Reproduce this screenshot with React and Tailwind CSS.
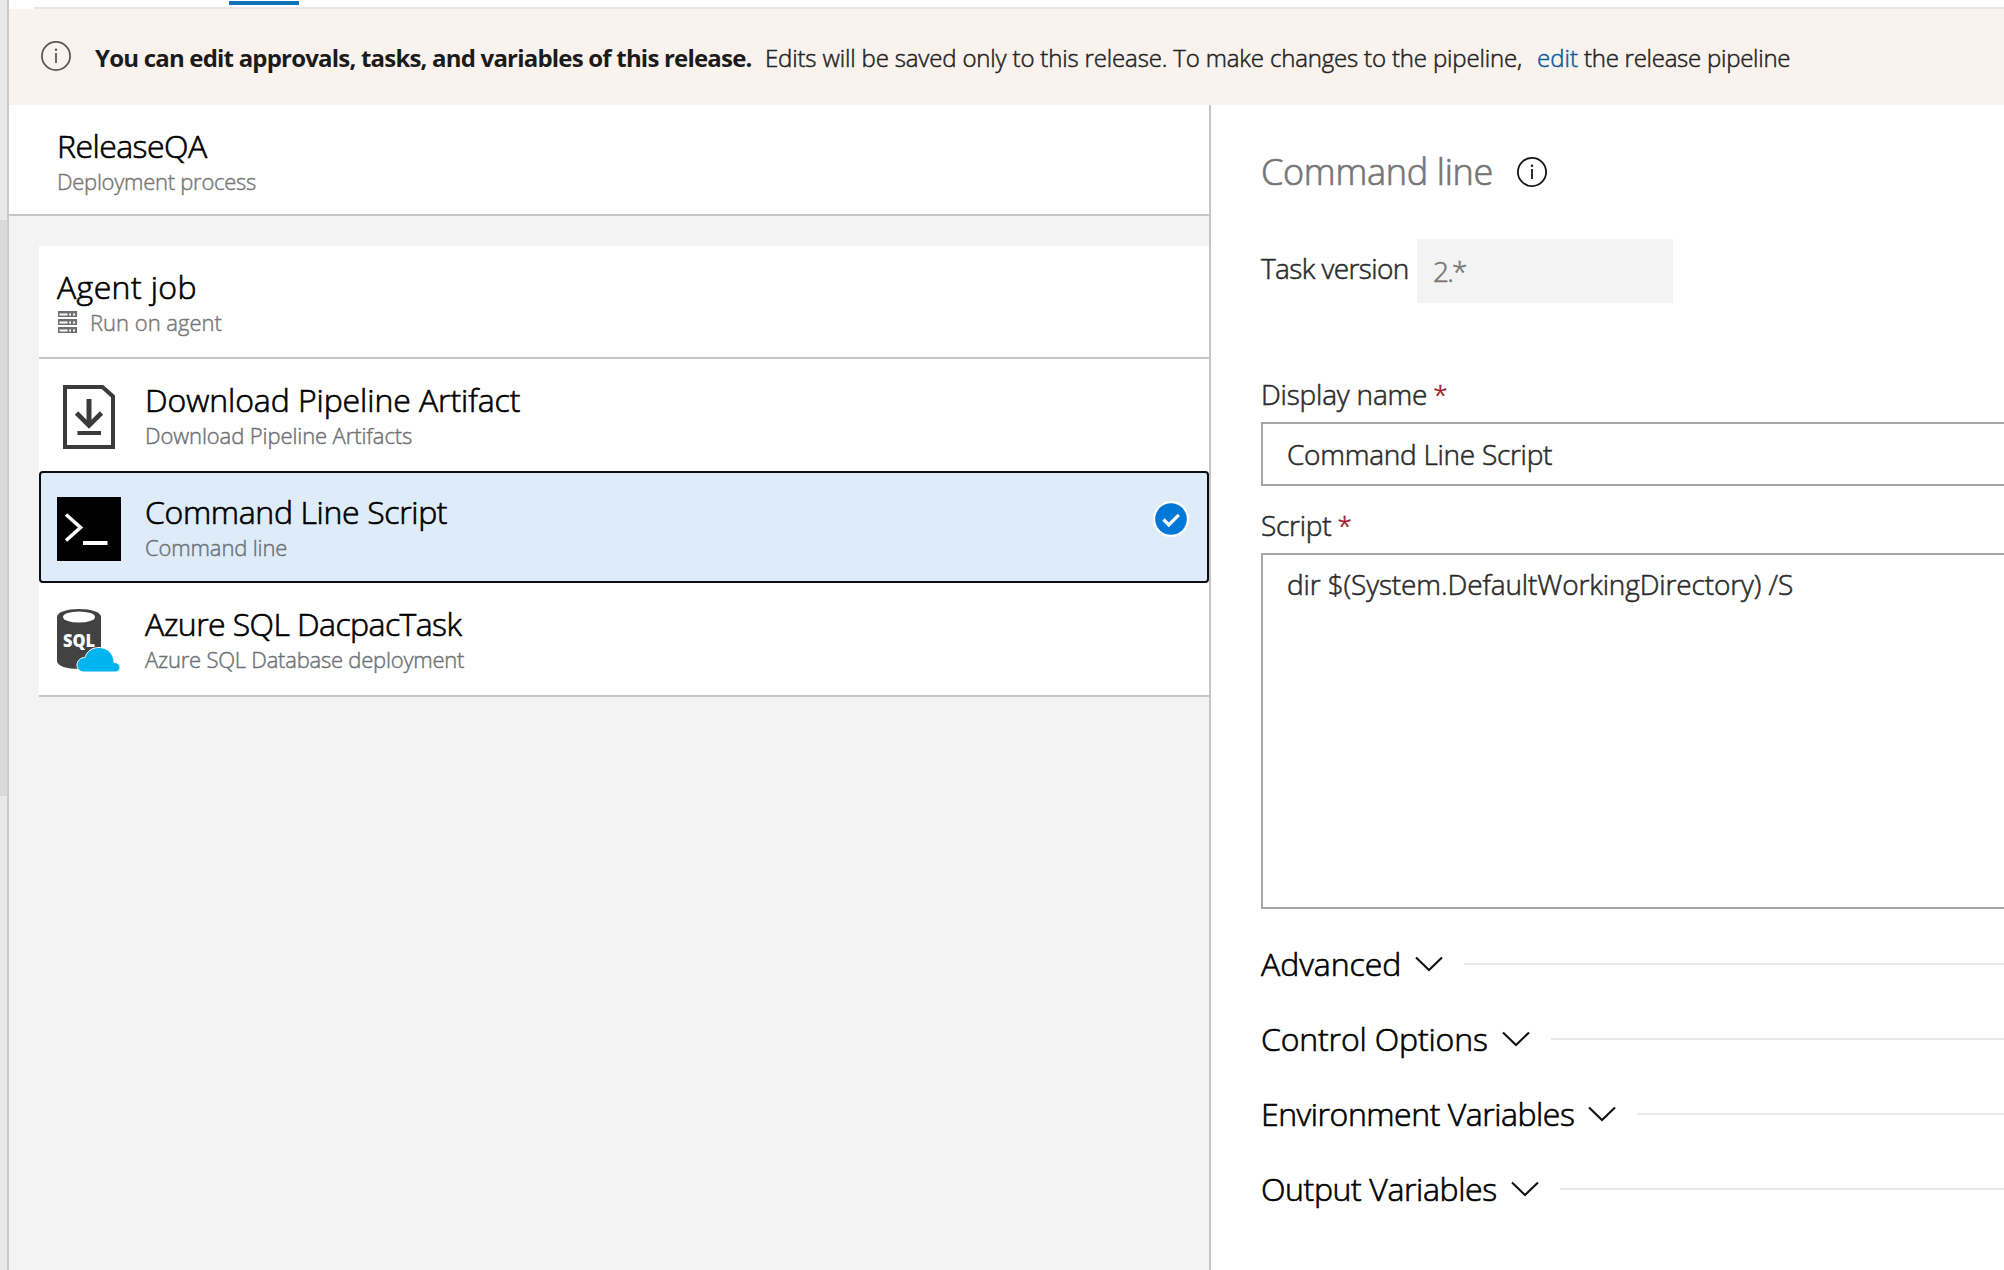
const text =
  "font-light whitespace-pre [-webkit-text-stroke-width:0.02em]";

function InfoIcon({ className }) {
  return (
    <svg viewBox="0 0 30 30" className={className} fill="none" stroke="currentColor">
      <circle cx="15" cy="15" r="14.1" strokeWidth="1.8" />
      <path d="M15 12V22" strokeWidth="1.8" />
      <circle cx="15" cy="8.800" r="1.2" fill="currentColor" stroke="none" />
    </svg>
  );
}

function ServersIcon() {
  return (
    <svg viewBox="0 0 19 22" className="ml-px h-[22px] w-[19px] shrink-0" fill="#6f6f6f">
      {[0, 8, 16].map((y) => (
        <path
          key={y}
          fillRule="evenodd"
          d={`M0 ${y}h19v6h-19z M1.500 ${y + 2.4}h8v2h-8z M11 ${y + 2.4}h2v2h-2z M15 ${y + 2.4}h2v2h-2z`}
        />
      ))}
    </svg>
  );
}

function DownloadIcon() {
  return (
    <svg viewBox="0 0 64 64" className="h-16 w-16 shrink-0" fill="none" stroke="#3b3b3b">
      <path d="M8 2H45.500L56 11.500V62H8Z" strokeWidth="4" />
      <path d="M32 14V40" strokeWidth="5" />
      <path d="M19.500 28L32 40.500L44.500 28" strokeWidth="4.6" />
      <path d="M20.500 48H44" strokeWidth="4" />
    </svg>
  );
}

function TerminalIcon() {
  return (
    <svg viewBox="0 0 64 64" className="h-16 w-16 shrink-0" fill="none" stroke="#fff">
      <rect width="64" height="64" fill="#000" stroke="none" />
      <path d="M9 17.500L23.500 30.500L9 43.500" strokeWidth="3.6" />
      <path d="M26 46H50.500" strokeWidth="4" />
    </svg>
  );
}

function SqlIcon() {
  return (
    <svg viewBox="0 0 64 64" className="h-16 w-16 shrink-0">
      <path d="M0 8C0 3 10 0 22 0S44 3 44 8V52C44 57 34 60 22 60S0 57 0 52Z" fill="#424242" />
      <ellipse cx="22" cy="8" rx="16" ry="5.6" fill="#fff" />
      <text
        x="22"
        y="38"
        textAnchor="middle"
        textLength="32"
        lengthAdjust="spacingAndGlyphs"
        fill="#fff"
        className="font-['Open_Sans',sans-serif] text-[17px] font-extrabold"
      >
        SQL
      </text>
      <path
        d="M27 63C22.500 63 20 60 20 56C20 51.500 23.500 48.500 28 48.500C29.500 42.500 35 38.500 42 38.500C50.500 38.500 57 45 57 53.500C60.500 53.500 63 55.500 63 58.500C63 61.500 60.500 63 58 63Z"
        fill="#00b4f0"
        stroke="#fff"
        strokeWidth="1"
      />
    </svg>
  );
}

function CheckBadge() {
  return (
    <svg viewBox="0 0 36 36" className="mt-[30px] mr-[20px] h-9 w-9 shrink-0">
      <circle cx="18" cy="18" r="18" fill="#fff" />
      <circle cx="18" cy="18" r="15.800" fill="#0078d7" />
      <path d="M10.500 18.500L15.800 23.800L25.800 13.800" fill="none" stroke="#fff" strokeWidth="3.300" />
    </svg>
  );
}

function Task({ icon, title, titleSpacing, subtitle, subtitleSpacing, selected, className }) {
  return (
    <div className={className}>
      <div className="pt-[26px]">{icon}</div>
      <div className="ml-6 flex-1 pt-[21px]">
        <div className={`text-[32px] leading-[40px] text-black ${titleSpacing} ${text}`}>{title}</div>
        <div className={`text-[22px] leading-[30px] text-[#6e7276] ${subtitleSpacing} ${text}`}>{subtitle}</div>
      </div>
      {selected && <CheckBadge />}
    </div>
  );
}

function Section({ title, spacing }) {
  return (
    <div className="flex h-[75px] items-start">
      <h3 className={`pt-px text-[32px] leading-[40px] text-black ${spacing} ${text}`}>{title}</h3>
      <svg viewBox="0 0 28 16" className="mt-[13px] ml-[14px] h-4 w-7 shrink-0" fill="none" stroke="#111">
        <path d="M1 1.500L14 14L27 1.500" strokeWidth="2.100" />
      </svg>
      <div className="mt-5 ml-[21px] h-0.5 flex-1 bg-[#e9e9e9]" />
    </div>
  );
}

function Label({ children, spacing, className }) {
  return (
    <div className={`flex gap-[6px] text-[28px] leading-[36px] ${className} ${text}`}>
      <span className={`text-[#2b2b2b] ${spacing}`}>{children}</span>
      <span className="text-[26px] text-[#a31522]">*</span>
    </div>
  );
}

export default function App() {
  return (
    <div className="flex h-[1270px] w-[2004px] overflow-hidden bg-white font-['Open_Sans',sans-serif]">
      <div className="flex w-[9px] shrink-0 flex-col border-r-2 border-[#cbcbcb] bg-[#e9e9e9] pt-[220px]">
        <div className="h-[576px] bg-[#dadada]" />
      </div>

      <div className="flex min-w-0 flex-1 flex-col">
        <div className="h-[7px] shrink-0 pt-px">
          <div className="ml-[220px] h-1 w-[70px] bg-[#0f73b9]" />
        </div>
        <div className="ml-[25px] h-0.5 shrink-0 bg-[#ebe6e4]" />

        <div className="flex h-24 shrink-0 bg-[#faf2ec]">
          <InfoIcon className="mt-8 ml-8 h-[30px] w-[30px] shrink-0 text-[#5c5856]" />
          <div className="ml-[24px] flex pt-[31px] text-[24px] leading-[36px] text-[#222]">
            <span className="w-[670px] text-[24px] font-bold tracking-[-0.800px] whitespace-pre text-[#1b1b1b]">
              You can edit approvals, tasks, and variables of this release.
            </span>
            <span className={`w-[772px] tracking-[-0.160px] ${text}`}>
              Edits will be saved only to this release. To make changes to the pipeline,
            </span>
            <a className={`w-[47px] text-[#0a5a9e] ${text}`}>edit</a>
            <span className={`tracking-[-0.260px] ${text}`}>the release pipeline</span>
          </div>
        </div>

        <div className="flex min-h-0 flex-1">
          <div className="flex w-[1202px] shrink-0 flex-col border-r-2 border-[#c6c6c6] bg-[#f3f3f3]">
            <div className="h-[111px] shrink-0 border-b-2 border-[#c6c6c6] bg-white pt-[21px] pl-12">
              <div className={`text-[32px] leading-[40px] tracking-[-0.550px] text-black ${text}`}>ReleaseQA</div>
              <div className={`text-[22px] leading-[30px] tracking-[-0.270px] text-[#777] ${text}`}>
                Deployment process
              </div>
            </div>

            <div className="mt-[30px] ml-[30px] bg-white">
              <div className="h-[113px] border-b-2 border-[#c6c6c6] pt-[21px] pl-[18px]">
                <div className={`text-[32px] leading-[40px] tracking-[0.400px] text-black ${text}`}>Agent job</div>
                <div className="flex items-center">
                  <ServersIcon />
                  <span className={`ml-[13px] text-[22px] leading-[30px] text-[#777] ${text}`}>Run on agent</span>
                </div>
              </div>
              <Task
                className="flex h-28 pl-[18px]"
                icon={<DownloadIcon />}
                title="Download Pipeline Artifact"
                titleSpacing="tracking-[-0.090px]"
                subtitle="Download Pipeline Artifacts"
                subtitleSpacing="tracking-[-0.100px]"
              />
              <Task
                className="flex h-28 rounded-[4px] bg-[#deebf8] pl-[18px] ring-2 ring-[#0b0e12] ring-inset"
                icon={<TerminalIcon />}
                title="Command Line Script"
                titleSpacing="tracking-[-0.350px]"
                subtitle="Command line"
                subtitleSpacing="tracking-[-0.140px]"
                selected
              />
              <Task
                className="flex h-[114px] border-b-2 border-[#c6c6c6] pl-[18px]"
                icon={<SqlIcon />}
                title="Azure SQL DacpacTask"
                titleSpacing="tracking-[-0.580px]"
                subtitle="Azure SQL Database deployment"
                subtitleSpacing="tracking-[-0.220px]"
              />
            </div>
          </div>

          <div className="flex min-w-0 flex-1 flex-col pl-[50px]">
            <div className="mt-[41px] flex h-[52px] items-center">
              <h2 className={`text-[36px] leading-[52px] tracking-[-0.290px] text-[#767676] ${text}`}>
                Command line
              </h2>
              <InfoIcon className="ml-6 h-[30px] w-[30px] shrink-0 text-[#151515]" />
            </div>

            <div className="mt-[41px] flex h-16">
              <span
                className={`w-[156px] pt-[11px] text-[28px] leading-[36px] tracking-[-0.590px] text-[#2b2b2b] ${text}`}
              >
                Task version
              </span>
              <div
                className={`w-64 bg-[#f3f3f3] pt-[14px] pl-4 text-[28px] leading-[36px] tracking-[-1.800px] text-[#777] ${text}`}
              >
                2.*
              </div>
            </div>

            <Label className="mt-[73px]" spacing="tracking-[-0.190px]">
              Display name
            </Label>
            <div
              className={`mt-[10px] h-16 border-2 border-r-0 border-[#a6a6a6] pt-[12px] pl-6 text-[28px] leading-[36px] tracking-[-0.270px] text-[#2b2b2b] ${text}`}
            >
              Command Line Script
            </div>

            <Label className="mt-[21px]" spacing="tracking-[-0.240px]">
              Script
            </Label>
            <div
              className={`mt-[10px] h-[356px] border-2 border-r-0 border-[#a6a6a6] pt-[11px] pl-6 text-[28px] leading-[36px] tracking-[-0.120px] text-[#2b2b2b] ${text}`}
            >
              dir $(System.DefaultWorkingDirectory) /S
            </div>

            <div className="mt-[34px]">
              <Section title="Advanced" spacing="tracking-[-0.060px]" />
              <Section title="Control Options" spacing="tracking-[-0.150px]" />
              <Section title="Environment Variables" spacing="tracking-[-0.470px]" />
              <Section title="Output Variables" spacing="tracking-[-0.380px]" />
            </div>
          </div>
        </div>
      </div>
    </div>
  );
}
